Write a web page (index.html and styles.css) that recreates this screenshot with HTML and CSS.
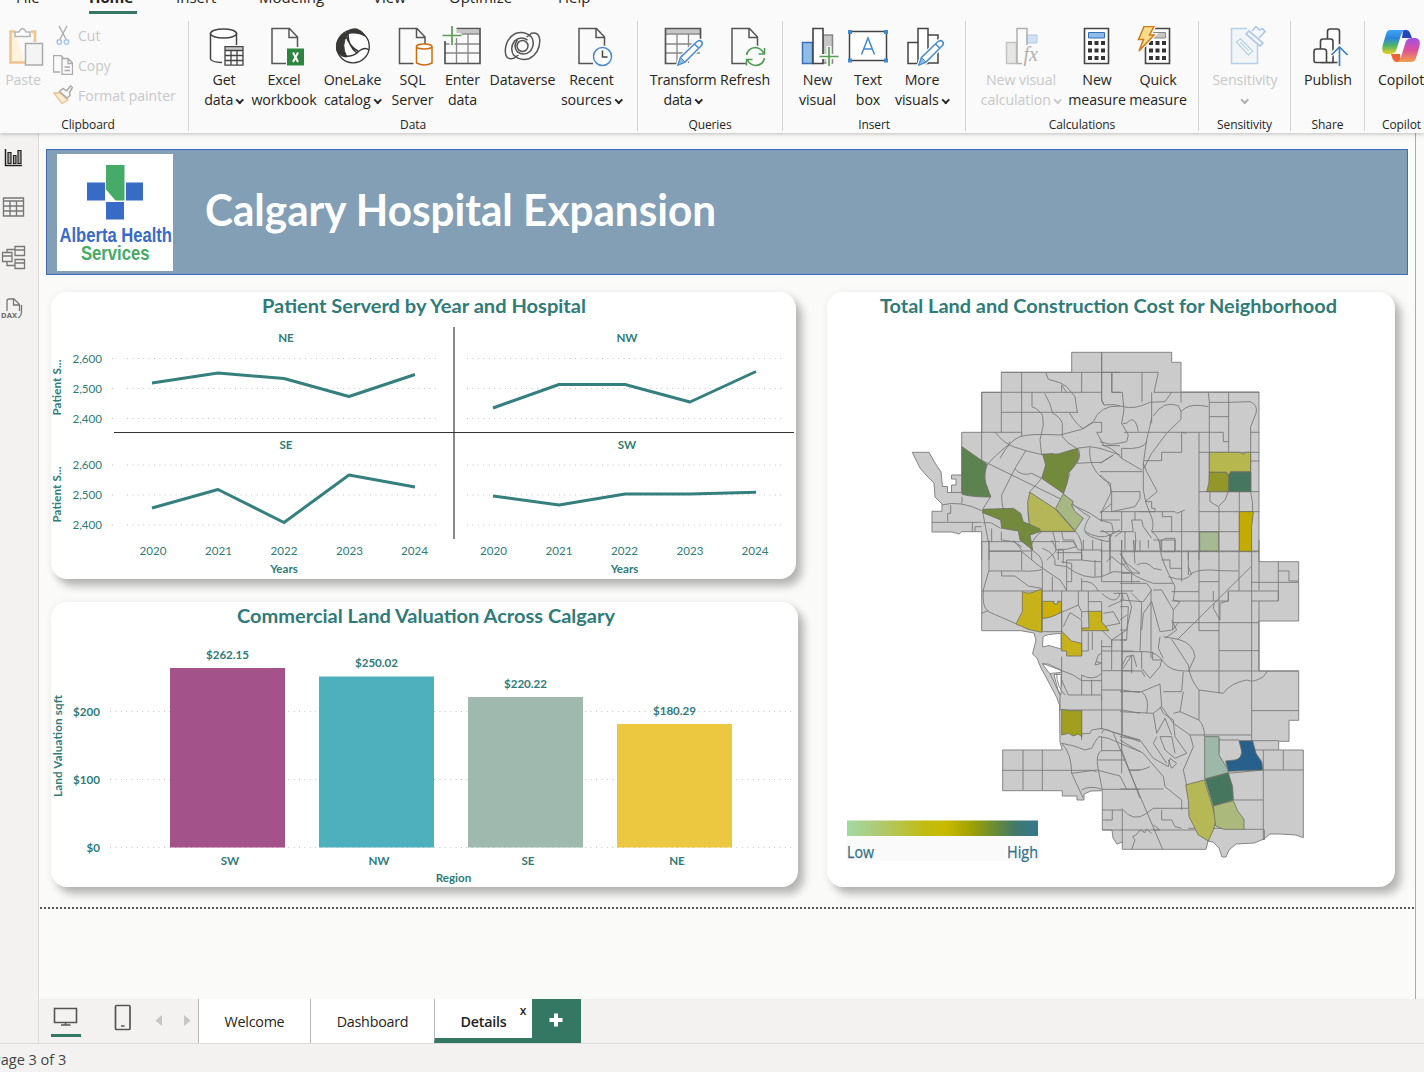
FILE: index.html
```html
<!DOCTYPE html>
<html lang="en">
<head>
<meta charset="utf-8">
<title>Calgary Hospital Expansion</title>
<link rel="stylesheet" href="styles.css">
</head>
<body>
<svg width="0" height="0" class="defs">
  <defs>
    <g id="doc"><path d="M14.500 35.500H.5V.5H18L26 9V19M17.500.5V9.500H26" fill="none" stroke="#555" stroke-width="1.500"/></g>
    <g id="pencil"><path d="M.5 24.500L3 17 19 1.500Q22-1 24 1T23.500 5.500L7.500 21.500Z" fill="#fafafa" stroke="#fafafa" stroke-width="4"/><path d="M.5 24.500L3 17 19 1.500Q22-1 24 1T23.500 5.500L7.500 21.500ZM17 3.500L21.500 8" fill="#fff" stroke="#4a8bd0" stroke-width="1.500"/><path d="M.5 24.500L3 17 7.500 21.500Z" fill="#8fbdea" stroke="#4a8bd0"/></g>
    <g id="keys" fill="#333"><path d="M0 0h4v4h-4zM6.500 0h4v4h-4zM13 0h4v4h-4zM0 7.500h4v4h-4zM6.500 7.500h4v4h-4zM13 7.500h4v4h-4zM0 15h4v4h-4zM6.500 15h4v4h-4zM13 15h4v4h-4z"/></g>
    <linearGradient id="cpA" x1="0" y1="0" x2="0" y2="1"><stop offset="0" stop-color="#3fa4f4"/><stop offset=".35" stop-color="#2b86dc"/><stop offset=".65" stop-color="#4fb36a"/><stop offset="1" stop-color="#e9d21d"/></linearGradient>
    <linearGradient id="cpB" x1="0" y1="0" x2="0" y2="1"><stop offset="0" stop-color="#a053e8"/><stop offset=".5" stop-color="#dd4f9b"/><stop offset="1" stop-color="#f3a04b"/></linearGradient>
    <linearGradient id="scale"><stop offset="0" stop-color="#a3d9a0"/><stop offset=".15" stop-color="#adcb79"/><stop offset=".42" stop-color="#c1bb0c"/><stop offset=".52" stop-color="#c8b900"/><stop offset=".64" stop-color="#a3a300"/><stop offset=".77" stop-color="#6b8d33"/><stop offset=".88" stop-color="#43796a"/><stop offset="1" stop-color="#337791"/></linearGradient>
  </defs>
</svg>

<header class="ribbon">
  <nav class="menu">
    <span class="m-file">File</span><span class="m-home active">Home</span><span class="m-insert">Insert</span><span class="m-model">Modeling</span><span class="m-view">View</span><span class="m-opt">Optimize</span><span class="m-help">Help</span>
  </nav>
  <div class="groups">
    <section class="group g-clip">
      <div class="tools">
        <div class="tool t-paste off"><svg viewBox="1 26 44 42"><path d="M15 31.500H10.500V62.500H25M31 31.500H35V42" fill="#fff3dc" stroke="#f0c48f" stroke-width="2.500"/><path d="M15 36.500V32h4q3.500-7 7 0h4v4.500z" fill="#fff" stroke="#b5b5b5" stroke-width="1.500"/><rect x="25.500" y="43.500" width="17" height="21.500" fill="#f4f4f4" stroke="#aaa" stroke-width="1.500"/></svg><span>Paste</span></div>
        <div class="small off">
          <div><svg viewBox="53 26 20 20"><path d="M59 27L66.500 41M67 27L59.500 41" stroke="#aaa" stroke-width="1.300"/><g fill="none" stroke="#a9c6e2" stroke-width="1.500"><circle cx="59.300" cy="43" r="2.300"/><circle cx="66.500" cy="43" r="2.300"/></g></svg>Cut</div>
          <div><svg viewBox="53 56 20 20"><path d="M60 73H53.500V56.500H61L64 60M62 59.500h6l4.500 4.500V75.500H62zM68 60v4.500h4.500M64.500 68h5.500M64.500 71.500h5.500" fill="none" stroke="#aaa" stroke-width="1.300"/></svg>Copy</div>
          <div><svg viewBox="53 86 20 20"><path d="M54 94l6 0 8 7-6 3.500z" fill="#fdeccf" stroke="#e9c08f" stroke-width="1.300"/><path d="M59.500 92.500l3.500-3 3.500 2.500 4-5 2 1.500-3 5 .5 3-3 2.500z" fill="#fafafa" stroke="#aaa" stroke-width="1.500"/></svg>Format painter</div>
        </div>
      </div>
      <h6>Clipboard</h6>
    </section>
    <section class="group g-data">
      <div class="tools">
        <div class="tool w52"><svg viewBox="202 26 44 42"><g fill="#fff" stroke="#444" stroke-width="1.500"><path d="M222 62.500Q211 62 210.500 59V33.500H236.500V46" /><ellipse cx="223.500" cy="33.500" rx="13" ry="4.500"/></g><rect x="223" y="45" width="22" height="22" fill="#fafafa"/><path d="M225 47h18v3.500h-18z" fill="#c8c8c8"/><path d="M225 46.700h18v18.500h-18zM225 50.500h18M225 55.500h18M225 60.500h18M231 50.500v14.500M237 50.500v14.500" fill="none" stroke="#444" stroke-width="1.300"/></svg><span>Get<br>data<i></i></span></div>
        <div class="tool w68"><svg viewBox="262 26 44 42"><use href="#doc" x="271.500" y="28"/><path d="M287 48.500h17v17h-17z" fill="#2e8540"/><path d="M293 52.500l5 9.500M298 52.500l-5 9.500" stroke="#fff" stroke-width="2"/></svg><span>Excel<br>workbook</span></div>
        <div class="tool w70"><svg viewBox="331 26 44 42"><circle cx="353" cy="46.500" r="16.300" fill="#fff" stroke="#333" stroke-width="1.300"/><path d="M346 33Q350 28 357 29 363 31 365 36 356 31 346 34zM345 33Q334 40 337 51 340 57 347 57 340 45 348 34z" fill="#383836" stroke="#383836"/><path d="M348 34Q348 46 357 53M344 56Q352 57 357 53 364 46 369 50M358 51Q350 47 346 36" fill="none" stroke="#333" stroke-width="1.500"/></svg><span class="pull">OneLake<br>catalog<i></i></span></div>
        <div class="tool w49"><svg viewBox="390.500 26 44 42"><use href="#doc" x="398.500" y="28"/><path d="M416 47V63Q424 67 431.500 63V47" fill="#fff" stroke="#cc6d11" stroke-width="1.500"/><ellipse cx="423.700" cy="46.500" rx="7.800" ry="2.500" fill="#fff" stroke="#cc6d11" stroke-width="1.500"/></svg><span>SQL<br>Server</span></div>
        <div class="tool w51"><svg viewBox="440.500 26 44 42"><path d="M456 29.500h23v4h-23z" fill="#c6c6c6"/><path d="M456 34H479M444 44H479.500M444 53H479.500M456 34V63M467.500 34V63" stroke="#888" stroke-width="1.300"/><path d="M456 28.500H479.500V63.500H444.500V41" fill="none" stroke="#555" stroke-width="1.700"/><path d="M451.500 26V45M442 35.500H461" stroke="#fafafa" stroke-width="5"/><path d="M451.500 26V45M442 35.500H461" stroke="#579b58" stroke-width="1.700"/></svg><span>Enter<br>data</span></div>
        <div class="tool w69"><svg viewBox="500.500 26 44 42"><g fill="none" stroke="#555" stroke-width="1.500"><circle cx="522" cy="46" r="5.500"/><path d="M514 58Q505 61 504.800 51 505 39 515 33.500 524 30.500 531 37 535 44 530 51 524 56.500 517 52 512 46 517 40M530 33.500Q539 31 539.300 41 539 53 529 58.500 520 61.500 513 55 509 48 514 41 520 35.500 527 40M526 37L531 33.500M518 55L513 58.500"/></g></svg><span>Dataverse</span></div>
        <div class="tool w70"><svg viewBox="570 26 44 42"><use href="#doc" x="578.500" y="28"/><circle cx="602.500" cy="56.500" r="11" fill="#fafafa"/><circle cx="602.500" cy="56.500" r="9" fill="#fff" stroke="#4a8bd0" stroke-width="1.500"/><path d="M602.500 50.500V57H607.500" fill="none" stroke="#444" stroke-width="1.500"/></svg><span class="pull">Recent<br>sources<i></i></span></div>
      </div>
      <h6>Data</h6>
    </section>
    <section class="group g-query">
      <div class="tools">
        <div class="tool w66"><svg viewBox="661 26 44 42"><path d="M665.500 28.500h35v5h-35z" fill="#c6c6c6"/><path d="M665.500 34H700M665.500 44H700M665.500 53H700M677 34V63M688.500 34V63" stroke="#888" stroke-width="1.300"/><path d="M700.500 40V28.500H665.500V63.500H679" fill="none" stroke="#555" stroke-width="1.700"/><use href="#pencil" x="677.500" y="40.500"/></svg><span class="tight">Transform<br>data<i></i></span></div>
        <div class="tool w58"><svg viewBox="723 26 44 42"><use href="#doc" x="731.500" y="28"/><circle cx="755.500" cy="56.500" r="11" fill="#fafafa"/><path d="M746.500 55Q748 48 755.500 47.500 761 48 763.500 53M764.500 58Q763 65 755.500 65.500 750 65 747.500 60M764.500 48v6h-6M746.500 65.500v-6h6" fill="none" stroke="#4f9a52" stroke-width="1.600"/></svg><span>Refresh</span></div>
      </div>
      <h6>Queries</h6>
    </section>
    <section class="group g-insert">
      <div class="tools">
        <div class="tool w49"><svg viewBox="795.500 26 44 42"><path d="M802 42.500h10v21h-10z" fill="#8fbdea" stroke="#3a6fb8" stroke-width="1.500"/><path d="M822 35h10v28h-10z" fill="#c6c6c6" stroke="#888" stroke-width="1.500"/><path d="M812.500 28.500h10v35h-10z" fill="#fff" stroke="#444" stroke-width="1.600"/><path d="M828.500 46V66M819 56.500H838" stroke="#fafafa" stroke-width="5"/><path d="M828.500 47V66M819 56.500H838" stroke="#54a04f" stroke-width="1.700"/></svg><span>New<br>visual</span></div>
        <div class="tool w52"><svg viewBox="846 26 44 42"><path d="M849.500 31.500h37v29h-37z" fill="#fff" stroke="#444" stroke-width="1.500"/><path d="M848 30h4v4h-4zM884 30h4v4h-4zM848 58.500h4v4h-4zM884 58.500h4v4h-4z" fill="#3f88d4"/><path d="M861.500 54.500L868 38L874.500 54.500M863.500 49H872.500" fill="none" stroke="#3f88d4" stroke-width="1.500"/></svg><span>Text<br>box</span></div>
        <div class="tool w60"><svg viewBox="902 26 44 42"><path d="M908 42.500h10v21h-10zM928 35h10v28h-10zM918 28.500h10v35h-10z" fill="#fff" stroke="#444" stroke-width="1.500"/><use href="#pencil" x="918.500" y="40.500"/></svg><span class="nudge">More<br>visuals<i></i></span></div>
      </div>
      <h6>Insert</h6>
    </section>
    <section class="group g-calc">
      <div class="tools">
        <div class="tool w89 off"><svg viewBox="999.500 26 44 42"><path d="M1006 42.500h10v21h-10z" fill="#e6e6e4" stroke="#c2c2c2" stroke-width="1.500"/><path d="M1026.500 35h10v8h-10z" fill="#cfe0f3" stroke="#b3cbe4"/><path d="M1016.500 63V28.500h10V45M1016.500 63.500h5" fill="none" stroke="#b0b0b0" stroke-width="1.500"/><text x="1023" y="61" class="fx">fx</text></svg><span class="pull">New visual<br>calculation<i></i></span></div>
        <div class="tool w62"><svg viewBox="1075 26 44 42"><path d="M1084.500 28.500h24v35h-24z" fill="#fff" stroke="#444" stroke-width="1.600"/><path d="M1088.500 32.500h16v5.500h-16z" fill="#8fbdea" stroke="#3a6fb8"/><use href="#keys" x="1088" y="41"/></svg><span>New<br>measure</span></div>
        <div class="tool w60"><svg viewBox="1136 26 44 42"><path d="M1145.500 28.500h24v35h-24z" fill="#fff" stroke="#444" stroke-width="1.600"/><path d="M1149.500 32.500h16v5.500h-16z" fill="#c6c6c6" stroke="#888"/><use href="#keys" x="1149" y="41"/><path d="M1144 26.500H1154L1149.500 35H1154L1139 51 1143.500 39.500H1138.500Z" fill="#f9dd8d" stroke="#fafafa" stroke-width="4"/><path d="M1144 26.500H1154L1149.500 35H1154L1139 51 1143.500 39.500H1138.500Z" fill="#f9dd8d" stroke="#cf7a17" stroke-width="1.500"/></svg><span>Quick<br>measure</span></div>
      </div>
      <h6>Calculations</h6>
    </section>
    <section class="group g-sens">
      <div class="tools"><div class="tool w92 off"><svg viewBox="1223 26 44 42"><path d="M1257.500 45V63.500H1231.500V28.500H1247" fill="#f2f5f8" stroke="#b9d0e6" stroke-width="1.600"/><path d="M1236.500 42l4-3 12 12-4 4zM1240 42l9 9" fill="#fff" stroke="#b9d0e6" stroke-width="1.400"/><path d="M1246 34l3-3 14 12-3 3zM1252 31l4-4.500 3.500 3.500 3-1.500 2.500 3-6 6.500" fill="#f4f8fc" stroke="#b0cae4" stroke-width="1.700"/></svg><span>Sensitivity<br><i class="solo"></i></span></div></div>
      <h6>Sensitivity</h6>
    </section>
    <section class="group g-share">
      <div class="tools"><div class="tool w74"><svg viewBox="1305.500 26 44 42"><g fill="#fff" stroke="#444" stroke-width="1.600"><path d="M1327 62V31.500Q1327 29 1329.500 29H1336.500Q1339 29 1339 31.500V62.500H1327"/><path d="M1320 62V41.500Q1320 39 1322.500 39H1330Q1332.500 39 1332.500 41.500V62.500H1320"/><path d="M1313.500 51.500Q1313.500 49 1316 49H1323.500Q1326 49 1326 51.500V62.500H1315Q1313.500 62.500 1313.500 60z"/></g><path d="M1339 46V66M1330.500 55L1339 46.500 1347.500 55" fill="none" stroke="#fafafa" stroke-width="4"/><path d="M1339 47V66M1331 55L1339 47 1347 55" fill="none" stroke="#427fb8" stroke-width="1.700"/></svg><span>Publish</span></div></div>
      <h6>Share</h6>
    </section>
    <section class="group g-cop">
      <div class="tools"><div class="tool w72"><svg viewBox="1379 26 44 42"><path d="M1403 30H1406Q1409 30 1410 33L1412 38H1402z" fill="#2644bd"/><path d="M1390 30H1405Q1402 31 1401 35L1396 51Q1394 54 1391 54H1386Q1381 53 1382.500 46L1386 34Q1387 30 1390 30Z" fill="url(#cpA)"/><path d="M1391 54H1400L1401 62H1396Q1393 61 1392 57z" fill="#ef6535"/><path d="M1412 38H1416Q1421 39 1419.500 46L1416 58Q1415 62 1411 62H1397Q1400 61 1401 57L1406 41Q1408 38 1412 38Z" fill="url(#cpB)"/></svg><span>Copilot</span></div></div>
      <h6>Copilot</h6>
    </section>
  </div>
</header>

<div class="workspace">
  <aside class="rail">
    <svg viewBox="0 145 38 26"><path d="M5.500 149V165.500H22" fill="none" stroke="#222" stroke-width="1.500"/><path d="M8 152.500h3v11h-3zM13.500 155.500h2.500v8h-2.500zM18 150.500h3v13h-3z" fill="#aaa" stroke="#222" stroke-width="1.200"/></svg>
    <svg viewBox="0 195 38 26"><path d="M3.500 198h20v18h-20zM3.500 201h20M3.500 206h20M3.500 211h20M10 201v15M16.500 201v15" fill="none" stroke="#777" stroke-width="1.400"/></svg>
    <svg viewBox="0 245 38 26"><path d="M2.500 252.500h9.500v9h-9.500zM2.500 256h9.500M15 246.500h9.500v9h-9.500zM15 250h9.500M15 259.500h9.500v9h-9.500zM15 263h9.500M7 252.500v-3h8M7 261.500v4h8" fill="none" stroke="#777" stroke-width="1.300"/></svg>
    <svg viewBox="0 294 38 26"><path d="M7 310V300Q7 298 9 298H14L19.500 303.500V310M13.500 298V304H19.500M21.500 304V311Q21.500 315 18 317" fill="none" stroke="#777" stroke-width="1.300"/><text x="1" y="317" class="dax" textLength="16">DAX</text></svg>
  </aside>
  <main>
    <div class="canvas">
      <div class="banner">
        <svg class="logo" viewBox="57 154 116 117"><path fill="#fff" d="M57 154h116v117H57z"/><path fill="#376bc6" d="M87 182.500h18v18H87zM126 182.500h17v18h-17zM106 202h18v17.500h-18z"/><path fill="#46aa69" d="M106 165h18.500v35.500h-9l-9.500-11z"/><g class="brand"><text x="59.500" y="241.700" fill="#376bc6" textLength="112.500" lengthAdjust="spacingAndGlyphs">Alberta Health</text><text x="81" y="260.300" fill="#46aa69" textLength="68.500" lengthAdjust="spacingAndGlyphs">Services</text></g></svg>
        <svg class="headline" viewBox="200 180 540 64"><text x="205" y="225.500" textLength="511" lengthAdjust="spacingAndGlyphs">Calgary Hospital Expansion</text></svg>
      </div>
      <div class="cards">
        <div class="left">
          <section class="card c1">
            <svg viewBox="50 292 746 287">
              <text class="title" x="262" y="313" textLength="324" lengthAdjust="spacingAndGlyphs">Patient Serverd by Year and Hospital</text>
              <g class="grid"><path d="M112 358.500h2M127 358.500H440M467 358.500H782M112 388.500h2M127 388.500H440M467 388.500H782M112 418.500h2M127 418.500H440M467 418.500H782M112 465h2M127 465H440M467 465H782M112 495h2M127 495H440M467 495H782M112 525h2M127 525H440M467 525H782"/></g>
              <path d="M454 327V539" stroke="#888" stroke-width="2"/><path d="M114 432.500H794" stroke="#333" stroke-width="1.200"/>
              <g class="lines"><path d="M152 383L218 373 284 378.500 349 396.500 415 374.500"/><path d="M493 408L559 384.500H625L690 402 756 371.500"/><path d="M152 508L218 489.500 284 522.500 349 475 415 487"/><path d="M493 496L559 505 625 494H690L756 492.300"/></g>
              <g class="lab b mid"><text x="286" y="342">NE</text><text x="627" y="342">NW</text><text x="286" y="449">SE</text><text x="627" y="449">SW</text><text x="284" y="573">Years</text><text x="624.500" y="573">Years</text></g>
              <g class="lab end"><text x="102" y="363">2,600</text><text x="102" y="393">2,500</text><text x="102" y="423">2,400</text><text x="102" y="469">2,600</text><text x="102" y="499">2,500</text><text x="102" y="529">2,400</text></g>
              <g class="lab mid"><text x="153" y="555">2020</text><text x="218.500" y="555">2021</text><text x="284" y="555">2022</text><text x="349.500" y="555">2023</text><text x="414.500" y="555">2024</text><text x="493.500" y="555">2020</text><text x="559" y="555">2021</text><text x="624.500" y="555">2022</text><text x="690" y="555">2023</text><text x="755" y="555">2024</text></g>
              <g class="lab b"><text transform="translate(61 415.500) rotate(-90)" textLength="56">Patient S...</text><text transform="translate(61 522.500) rotate(-90)" textLength="56">Patient S...</text></g>
            </svg>
          </section>
          <section class="card c2">
            <svg viewBox="51 602 747 285">
              <text class="title" x="237" y="623" textLength="378" lengthAdjust="spacingAndGlyphs">Commercial Land Valuation Across Calgary</text>
              <g class="grid"><path d="M110 711.500H794M110 779.500H794M110 847.500H794"/></g>
              <path fill="#a4538a" d="M170 668h115v179.500H170z"/><path fill="#4eafbd" d="M319 676.500h115v171H319z"/><path fill="#a0b9ae" d="M468 697h115v150.500H468z"/><path fill="#ecc740" d="M617 724h115v123.500H617z"/>
              <g class="lab b mid"><text x="227.500" y="659">$262.15</text><text x="376.500" y="667">$250.02</text><text x="525.500" y="688">$220.22</text><text x="674.500" y="715">$180.29</text><text x="230" y="865">SW</text><text x="379" y="865">NW</text><text x="528" y="865">SE</text><text x="677" y="865">NE</text><text x="453.500" y="882">Region</text></g>
              <g class="lab b end"><text x="100" y="716">$200</text><text x="100" y="784">$100</text><text x="100" y="852">$0</text></g>
              <text class="lab b" transform="translate(62 797) rotate(-90)" textLength="102">Land Valuation sqft</text>
            </svg>
          </section>
        </div>
        <section class="card c3">
          <svg viewBox="827 292 568 595">
            <text class="title" x="880" y="313" textLength="457" lengthAdjust="spacingAndGlyphs">Total Land and Construction Cost for Neighborhood</text>
            <path class="city" d="M1071.700 352.300H1171.700V362.300H1181V392H1259V561.700H1298.700V621H1259V671H1298.700V720.300H1289V741.300H1278.700V750H1303.300V837.700L1296 835 1280 834 1270 834 1264 839 1254 843 1236 844 1229 850 1226 857 1222 857 1219 848 1213 842 1208 841 1206 849.300H1122.300V842L1117 844 1113 838 1112 830H1102.300V790.700L1091 791 1084 794V800H1077V796H1062.300V790.700H1002.700V750H1062.300L1060 742 1059.500 705 1057 698 1046 677 1041 668 1037 658 1032.500 654 1036 640 1034 633 1021 630.700H981.700V531.700H961.700L959 534 952 532H932V511.300H942V504L935 497 934 483 926 475 920 468 912.300 452.300H929L935 463 941 472 942.500 486.500H947.500V492.500H961.700V432.300H981.700V392.300H1001.300V372.300H1071.700Z"/>
            <path d="M1043 637Q1045 634 1061 633.500V649L1049 645.500 1042.500 647ZM1042.500 664L1048 664 1061 670V672.500L1049.500 673.500ZM1054 674.500H1061V695L1058 690Z" fill="#fff" stroke="#888"/>
            <path d="M951.500 475H961.700V492.500H951.500V485H956V479H951.500Z" class="city"/>
            <g class="net" transform="translate(900 340) scale(.3333)"><path d="M605 37V97M365 97V290M304 157V277M245 157V375M304 217H535M245 157H605M304 97H660M545 97V157M605 97V180L612 195M636 97V157H660M245 277H365M396 157V200Q420 210 428 228L430 255 420 300 425 345M434 160Q452 190 458 220 480 230 487 250V290Q500 310 530 325L570 320 600 325 660 345M437 97L445 118 480 128 500 140 525 170 532 217M485 155V135L500 157M508 218Q530 255 550 266L580 245Q600 195 660 198M300 355Q330 300 360 290T480 285L545 268 580 247H605V277H590L612 317H660M286 277Q310 310 345 322T430 345L460 340M262 375Q280 350 325 315L330 305M245 361L570 520 600 540H660M262 375Q250 400 257 430L272 470 248 508M377 333L345 385 305 465Q305 490 310 507M345 387Q365 410 395 400L425 415 388 457M186 470V490M126 495Q180 480 245 512M152 495V520H143V545M96 547H245M217 547V575M225 575V560H245M535 325Q545 350 530 370L570 368 605 367 640 345M570 320Q565 360 585 390T632 430V460L605 515V545M510 400Q500 430 490 460M490 460Q530 510 570 530 550 560 555 575 600 600 630 585L660 570M248 515L265 605M248 548H272L302 565M304 575V600L340 605 365 620M275 565V605M245 605V660M267 605V660M267 633H395M395 628V660M420 575H525M458 575Q470 610 467 635 440 660 440 660M485 575L490 600H520L530 620 500 628H475V660M525 572Q550 600 545 635V660M390 457Q380 510 388 550M425 575Q390 600 395 628M555 575Q560 590 610 602M605 605V660M630 585V660"/></g>
            <g class="net" transform="translate(1100 340) scale(.3333)"><path d="M5 37V180L12 195Q40 190 70 200T150 187L195 185 215 157M35 97V157H67L72 210 65 250 85 285 80 305Q50 312 30 313L0 305M5 97H175L162 157H478M126 97V187M155 157V250M243 156V187M0 395H127M160 228Q190 180 235 197L243 215 255 205Q275 190 325 200M243 215V238L200 280 155 340 132 385M68 250H80Q105 220 115 275M72 277H297V515M155 232Q150 260 140 300L130 370V450Q135 490 150 520T155 575Q180 590 182 630M65 355V325Q130 330 140 305M5 315Q35 320 65 355L125 390M0 370L40 345M132 362H185V337H245V277L260 280M140 395L172 455 135 485H155V505H165V515H115M130 370L140 395M325 157L328 187V455M328 187H390L450 185Q475 195 468 220L452 260V395M386 157V335M328 230H386M297 277H370V305H385M297 337H478M452 277H478M452 363H478M297 455H478M297 515H478M418 455V633M357 500V633M330 455Q330 470 330 485L355 500 375 480 385 455M452 455Q460 490 458 515M0 405Q30 425 35 455V490L0 520M35 455H120V475L105 500 35 515 35 490M0 515H225L230 520 255 510M297 515V660M245 515V633M0 575H100L95 540H125L130 560 155 595M155 575H418M187 515V530H215V575M182 605L195 595H225V633M0 633H478M105 515V540M65 515V575L45 590M75 575V633M105 575Q110 600 105 633M0 540L35 550 40 575 25 605 0 600M5 570L30 585V633M265 633V660"/></g>
            <g class="net" transform="translate(960 540) scale(.3333)"><path d="M65 5H300M87 0V90L70 150Q65 200 85 215L170 252M87 34H185V90M87 93H185Q230 95 247 88V275M125 93V108H165L205 138 245 145M65 153H520M185 35Q235 80 300 120 315 140 320 153M210 25L235 45Q250 60 247 85M160 0L185 30M247 25Q290 40 285 75L320 80Q370 120 425 110L460 95 540 100M275 0L290 30H310V70M305 5L340 5 355 30H425V60M290 38H365V60H320V153M277 110V153M303 65L335 70V125H320M405 60V110M370 0V30M398 0V30M365 30V60L405 65 425 65V110M365 115V153M365 125Q400 120 415 153M425 110V125H540M65 220L85 212M247 210H305V275M247 235Q280 230 355 195V153M247 275H305M305 153V275M330 218L365 240V272M355 195L365 215V235M310 260L330 218M365 272V348M385 215V153M385 185H425V270L455 300H500M385 215H365M385 275V333H365M397 275V330M425 300V480M425 333H520M425 392H520M425 320H455V300M455 300V390M410 365L425 370 405 375 415 345 425 340M487 275V580M305 350V440M305 420L325 465H425M365 405V465M395 420V465M247 370L340 405 365 422H425M365 405Q400 425 425 400M290 400Q290 440 315 465M270 400L300 465V510H487L540 520M425 450H487L540 458M425 470V570M365 510V600M425 580Q430 560 455 575L540 600M365 582L390 580 395 570 425 565 470 580 540 605M305 610Q340 615 375 630L395 625Q415 585 420 590L445 595 540 635M305 610Q335 640 335 700L370 775M335 700L410 690 480 708 500 748M128 691H395L410 695M189 630V750M247 630V750M425 590V632Q405 640 415 690T427 750M425 632H485V610M412 660H495M485 630L540 775M365 750Q390 735 425 748H540M425 110V60M440 65L455 50 485 75 500 70M450 100V60M485 0V45L500 70 540 100M450 0V60M520 0L525 70M425 160Q470 200 480 160M460 160H500L515 200 500 270 455 300M430 220L460 215 480 250 430 260M445 200L490 180 485 155M485 380L500 350 520 345 530 380M505 690L540 690"/></g>
            <g class="net" transform="translate(1120 540) scale(.3333)"><path d="M0 35H417M45 0V35M120 0Q115 40 145 100L165 140 160 180 180 185 160 210 158 270M5 65Q15 85 35 100T100 130L160 130M5 100H30M0 130H80L95 150 70 185 0 180M5 0V700M60 0V35M85 0V25M100 0H165V35H130M125 0V35M0 40Q20 80 35 95V130M50 75Q80 60 100 85L125 90M125 60H150V85H185M185 35V125M205 35V105M145 110Q200 130 215 100 240 85 300 92L355 93M237 35V272M297 35V460M357 35V153M395 35V600M417 0V150M475 65V183H393M393 127H536M475 93H507V123H536M393 80L173 298M237 125H297M155 155H237M155 183H325V153H475V183M280 183V153M325 155V183L300 190V240L280 205 283 190M158 248H417M417 183V243M417 243V393M237 272H297M297 332H417M5 335H75Q110 335 130 365T200 393L536 393M65 335V385L90 415 120 380 125 360M35 160L65 190 60 335M65 270L70 220 95 185 120 275 158 270M100 150H125L160 210M98 335V360H125M120 290L115 325 130 355M130 290L175 298Q220 310 225 350L205 395M155 298L205 375Q210 420 237 450L310 460Q330 430 380 420 400 430 430 410L443 393M158 270L175 248M135 295L170 270 155 240M190 395L185 455H130M237 450V540M0 455H65L120 432 125 500 100 520 0 515M65 455Q90 475 80 520M190 455L180 515 237 540Q255 560 253 590M100 520L110 580 135 535 155 585M5 393H65L75 410M180 515L160 520M125 500L160 550 210 585H395M120 500L130 520 160 540 165 590 200 640 165 655 135 630 120 590 155 590 165 640M0 590L60 600 100 655 145 680 150 655 170 670 155 685 145 660M210 585L220 620 190 690 200 735M0 600Q40 625 70 640L130 710 135 740 185 780V810M-20 580L128 928M30 690Q60 695 90 680M0 747H130M5 805Q40 850 80 820L100 805H205M5 870H120L100 855M100 870H230M205 865H370M125 810V840H155L165 860 185 865M110 590L100 610 140 670M395 512H536M297 595V640M297 600H357M395 602H476M430 630V900M400 630H476M430 690H550M490 630V690M433 870V900M325 700L430 690M340 780H430M370 868H433M35 928L45 900 38 890 48 885 60 870 75 878 80 868 95 880M93 355V150M35 400V345L10 385M0 200H25L20 300H0M0 240L20 225M0 270H20M205 80L215 105M210 780V800"/></g>
            <g class="net"><path d="M1102.300 810H1122.300V830H1102.300M1112.300 810V820H1102.300M1122.300 830V843"/></g>
            <g class="hoods">
              <g transform="translate(900 340) scale(.3333)"><path fill="#5c8250" d="M186 320L260 372Q250 410 257 430L272 471Q220 472 186 463Z"/><path fill="#73893c" d="M428 342H475L532 325 537 350Q530 375 505 400 505 430 490 460L425 415 437 375Z"/><path fill="#b5b657" d="M390 457L465 506 525 574H420L388 552Q383 510 383 485Z"/><path fill="#a8b882" d="M490 462L520 485 515 495 525 515 550 535 525 572 467 505Z"/><path fill="#73893c" d="M248 508L340 505 362 520 370 545 420 567 420 575 390 585 398 630 360 600 355 573 305 565 302 540 248 518Z"/></g>
              <g transform="translate(1100 340) scale(.3333)"><path fill="#b7b750" d="M328 337H420L432 343 435 337H452V395H392L388 410 380 397H328Z"/><path fill="#939628" d="M328 397H378L386 410V455H320Q330 430 328 397Z"/><path fill="#477660" d="M392 396H453V455H386V405Z"/><path fill="#c2ac00" d="M418 515H460L455 560V634H418Z"/><path fill="#a6b995" d="M299 576H356V633H299Z"/></g>
              <g transform="translate(960 540) scale(.3333)"><path fill="#c7b319" d="M187 155Q210 165 230 152L245 148V277L205 268 168 252 187 215Z"/><path fill="#ccb003" d="M247 184H282V192H293V184H304V215Q275 235 247 235Z"/><path fill="#c7b319" d="M385 214H425V245L447 272H366V264H387Z"/><path fill="#c7b319" d="M305 274L335 303 365 310V348H320V333H305Z"/><path fill="#a39f1e" d="M305 508L330 512H365V590L355 582 340 588 325 580 305 585Z"/></g>
              <g transform="translate(1120 540) scale(.3333)"><path fill="#9db8a9" d="M254 590H297V645L325 690V698L254 717Z"/><path fill="#27608a" d="M357 602H398L408 640 425 665 429 690 325 694 317 663 345 660Q368 655 364 630Z"/><path fill="#47765f" d="M256 718L325 699 338 740 340 780 280 798Z"/><path fill="#b6b755" d="M197 735L253 720 277 798 288 840 280 870 265 903 235 885 207 830 205 780Z"/><path fill="#acb97c" d="M280 798L340 782Q350 815 372 838V868H312L287 858Z"/></g>
            </g>
            <path fill="#fafafa" d="M846 836h194v25H846z"/><rect x="847" y="820.500" width="191" height="15.500" fill="url(#scale)"/>
            <g class="legend"><text x="847" y="857.500" textLength="27" lengthAdjust="spacingAndGlyphs">Low</text><text x="1007" y="857.500" textLength="31" lengthAdjust="spacingAndGlyphs">High</text></g>
          </svg>
        </section>
      </div>
    </div>
    <footer class="pages">
      <div class="device on"><svg viewBox="51 1003 30 28"><path d="M54.500 1008.500h22v14h-22z" fill="none" stroke="#555" stroke-width="1.600"/><path d="M65.500 1022V1025M61 1025H70.500" stroke="#555" stroke-width="1.500"/></svg></div>
      <div class="device phone"><svg viewBox="107 1003 30 28"><rect x="114.500" y="1005.500" width="14.500" height="24" rx="1" fill="none" stroke="#555" stroke-width="1.700"/><path d="M120 1026H123.500" stroke="#555" stroke-width="1.500"/></svg></div>
      <div class="arrows"><svg viewBox="150 1010 46 20"><path d="M162 1015V1026L155.500 1020.500ZM184 1015V1026L190.500 1020.500Z" fill="#c6c6c6"/></svg></div>
      <div class="tab p1">Welcome</div><div class="tab p2">Dashboard</div><div class="tab p3">Details<b>x</b></div>
      <div class="add"><svg viewBox="549 1012 14 14"><path d="M556 1012.500V1025.500M549.500 1019H562.500" stroke="#fff" stroke-width="4"/></svg></div>
    </footer>
  </main>
</div>
<div class="status"><span>Page 3 of 3</span></div>
</body>
</html>
```
FILE: styles.css
```css
* { box-sizing: border-box; }
body { margin: 0; width: 1424px; height: 1072px; overflow: hidden; display: flex; flex-direction: column; background: #f3f2f1; font-family: "Open Sans", "Noto Sans", sans-serif; color: #252423; }
.defs { position: absolute; }
svg { display: block; }

.ribbon { height: 133px; flex: none; background: #fafafa; box-shadow: 0 1px 4px rgba(0,0,0,.25); z-index: 1; overflow: hidden; clip-path: inset(0 0 -8px 0); }
.menu { height: 14px; display: flex; font-size: 15px; padding-left: 16px; }
.menu span { line-height: 22px; margin-top: -14px; height: 28px; white-space: nowrap; }
.m-file { width: 73px; }
.menu .m-home { width: 48px; margin-right: 39px; font-weight: 700; border-bottom: 3px solid #347864; letter-spacing: -.1px; }
.m-insert { width: 83px; }
.m-model { width: 114px; }
.m-view { width: 76px; }
.m-opt { width: 109px; }

.groups { display: flex; height: 112px; margin-top: 7px; }
.group { display: flex; flex-direction: column; flex: none; border-right: 1px solid #d4d4d4; height: 110px; }
.g-clip { width: 189px; }
.g-data { width: 449px; }
.g-query { width: 145px; }
.g-insert { width: 183px; }
.g-calc { width: 233px; }
.g-sens { width: 92px; }
.g-share { width: 74px; }
.g-cop { width: 73px; border: 0; }
.group h6 { margin: 0; width: 100%; text-align: center; font-weight: 400; font-size: 12px; line-height: 17px; letter-spacing: -.1px; }
.g-clip h6 { padding-right: 12px; }
.tools { display: flex; height: 95px; flex: none; padding-top: 5px; }
.g-data .tools { padding-left: 9px; }
.g-query .tools { padding-left: 12px; }
.g-insert .tools { padding-left: 10px; }
.g-calc .tools { padding-left: 11px; }
.tool { flex: none; display: flex; flex-direction: column; align-items: center; text-align: center; font-size: 14.200px; line-height: 20px; letter-spacing: -.1px; white-space: nowrap; }
.tool svg { width: 44px; height: 42px; flex: none; }
.tool span { margin-top: 2px; }
.tool .tight { letter-spacing: -.3px; }
.tool .nudge { margin-left: -4px; }
.tool .pull { margin-left: -1px; }
.off { color: #c8c8c8; }
.t-paste { width: 46px; }
.w49 { width: 49px; } .w51 { width: 51px; } .w52 { width: 52px; } .w58 { width: 58px; }
.w60 { width: 60px; } .w62 { width: 62px; } .w66 { width: 66px; } .w68 { width: 68px; }
.w69 { width: 69px; } .w70 { width: 70px; } .w72 { width: 72px; } .w74 { width: 74px; }
.w89 { width: 89px; } .w92 { width: 92px; }
.tool i { display: inline-block; width: 5.500px; height: 5.500px; border: solid currentColor; border-width: 0 2px 2px 0; transform: rotate(45deg); margin: 0 1px 3px 4px; }
.tool i.solo { margin: 0 0 3px; color: #aaa; }
.small { padding-left: 7px; font-size: 14px; margin-top: -1px; }
.small div { display: flex; align-items: center; height: 20px; margin-bottom: 10px; gap: 5px; white-space: nowrap; }
.small svg { width: 20px; height: 20px; }
.fx { font: italic 20px "Liberation Serif", serif; fill: #b0b0b0; }

.workspace { display: flex; height: 911px; flex: none; border-bottom: 1px solid #dcdbda; }
.rail { width: 39px; flex: none; border-right: 1px solid #dcdcdc; padding-top: 12px; display: flex; flex-direction: column; gap: 24px; }
.rail svg { width: 38px; height: 26px; flex: none; }
.dax { font-size: 7.500px; font-weight: 700; fill: #666; }
main { flex: 1; display: flex; flex-direction: column; background: #fafaf8; }
.canvas { width: 1377px; height: 866px; flex: none; padding: 16px 7px 0; border-right: 1px solid #aaa; background: repeating-linear-gradient(90deg, #555 0 2px, transparent 2px 4px) 1px 774px / 100% 2px no-repeat; }
.banner { width: 1362px; height: 126px; border: 1px solid #3c6cbb; background: #829fb6; display: flex; padding: 4px 0 0 10px; }
.logo { width: 116px; height: 117px; }
.brand text { font: 700 21px "Liberation Sans", sans-serif; }
.headline { width: 540px; height: 64px; margin: 26px 0 0 27px; }
.headline text { font-family: Lato, sans-serif; font-size: 43px; font-weight: 700; fill: #fff; }
.cards { display: flex; margin-top: 17px; padding-left: 5px; }
.left { width: 776px; display: flex; flex-direction: column; gap: 23px; }
.card { background: #fff; border-radius: 16px; box-shadow: 6px 7px 9px rgba(0,0,0,.27), 0 0 8px rgba(0,0,0,.05); }
.card svg { display: block; height: 100%; }
.c1 { width: 745px; height: 287px; }
.c1 svg { width: 746px; margin-left: -1px; }
.c2 { width: 747px; height: 285px; }
.c2 svg { width: 747px; }
.c3 { width: 568px; height: 595px; }
.c3 svg { width: 568px; }
.card text { font-family: Lato, sans-serif; fill: #2f7b7a; }
.card .title { font-size: 19.800px; font-weight: 700; }
.lab { font-size: 11.600px; }
.card .b { font-size: 11.600px; font-weight: 700; }
.mid { text-anchor: middle; }
.end { text-anchor: end; }
.grid path { fill: none; stroke: #c4c4c4; stroke-width: 1; stroke-dasharray: 1 4.400; }
.lines path { fill: none; stroke: #35807f; stroke-width: 3; stroke-linejoin: round; }
.city { fill: #cbcbcb; stroke: #858585; stroke-width: 1; }
.net path { fill: none; stroke: #7b7b7b; stroke-width: 2.700; }
.net:not([transform]) path { stroke-width: .9; }
.hoods path { stroke: #6f7163; stroke-width: 2.500; }
.card .legend text { font: 15.500px "Open Sans", sans-serif; fill: #327089; stroke: #327089; stroke-width: .25; }

.pages { height: 44px; flex: none; display: flex; background: #f3f2f1; }
.device { width: 30px; margin-left: 12px; height: 38px; padding-top: 4px; }
.device svg { width: 30px; height: 28px; }
.on { border-bottom: 3px solid #347864; }
.phone { margin-left: 27px; }
.arrows { width: 46px; margin: 11px 2px 0 12px; }
.arrows svg { width: 46px; height: 20px; }
.tab { height: 44px; border-left: 1px solid #b8b8b8; background: #fff; font-size: 14.300px; line-height: 45px; text-align: center; letter-spacing: -.25px; }
.p1 { width: 112px; }
.p2 { width: 124px; }
.p3 { width: 98px; font-weight: 600; position: relative; border-bottom: 5px solid #347864; }
.p3 b { position: absolute; right: 6px; top: 3px; line-height: 17px; font-size: 12px; font-weight: 600; }
.add { width: 49px; height: 44px; background: #347864; padding: 14px 0 0 17px; }
.add svg { width: 14px; height: 14px; }
.status { flex: 1; overflow: hidden; font-size: 14.500px; line-height: 32px; }
.status span { margin-left: -8px; color: #444; }
```
